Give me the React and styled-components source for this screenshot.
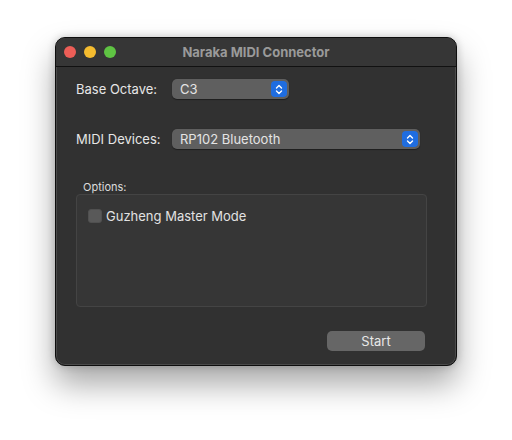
import React from "react";
import styled, { createGlobalStyle } from "styled-components";

const GlobalStyle = createGlobalStyle`
  html, body {
    margin: 0;
    padding: 0;
    background: #ffffff;
  }
  body {
    font-family: Inter, "Liberation Sans", sans-serif;
    -webkit-font-smoothing: antialiased;
  }
`;

const Page = styled.div`
  width: 512px;
  height: 440px;
  padding: 37px 0 0 55px;
  box-sizing: border-box;
`;

const Window = styled.div`
  width: 402px;
  height: 329px;
  box-sizing: border-box;
  display: flex;
  flex-direction: column;
  background: #313131;
  border: 1px solid #0e0e0e;
  border-radius: 10px;
  box-shadow: inset 0 0 0 1px #4a4a4a, 0 18px 32px rgba(0, 0, 0, 0.35),
    0 0 8px rgba(0, 0, 0, 0.2);
  overflow: hidden;
`;

const TitleBar = styled.div`
  height: 28px;
  flex-shrink: 0;
  display: flex;
  align-items: center;
  padding: 0 8px;
  background: #363636;
  border-bottom: 1px solid #111;
  position: relative;
`;

const Lights = styled.div`
  display: flex;
  gap: 8px;
`;

const Light = styled.span`
  width: 12px;
  height: 12px;
  border-radius: 50%;
  background: ${(p) => p.color};
`;

const Title = styled.div`
  position: absolute;
  left: 0;
  right: 0;
  text-align: center;
  font-size: 13px;
  font-weight: 700;
  color: #9a9a9a;
  pointer-events: none;
`;

const Content = styled.div`
  flex: 1;
  display: flex;
  flex-direction: column;
  padding: 12px 29px 14px 20px;
`;

const Row = styled.div`
  display: flex;
  align-items: center;
  height: 20px;
  margin-bottom: ${(p) => p.gap || 0}px;
`;

const Label = styled.span`
  width: 96px;
  flex-shrink: 0;
  font-size: 13px;
  color: #e6e6e6;
`;

const Popup = styled.div`
  width: ${(p) => p.width}px;
  height: 20px;
  box-sizing: border-box;
  display: flex;
  align-items: center;
  justify-content: space-between;
  padding: 0 2px 0 8px;
  background: #5f5f5f;
  border-radius: 5px;
  box-shadow: 0 0.5px 1px rgba(0, 0, 0, 0.4);
  font-size: 13px;
  color: #e4e4e4;
`;

const Stepper = styled.span`
  width: 16px;
  height: 16px;
  border-radius: 4px;
  background: #1f6de0;
  display: flex;
  align-items: center;
  justify-content: center;
`;

const GroupTitle = styled.div`
  font-size: 11px;
  line-height: 13px;
  color: #dcdcdc;
  margin: 0 0 0 7px;
`;

const GroupBox = styled.div`
  height: 113px;
  box-sizing: border-box;
  background: #363636;
  border: 1px solid #444;
  border-radius: 4px;
  padding: 13px 11px;
`;

const CheckRow = styled.label`
  display: flex;
  align-items: center;
  gap: 4px;
  font-size: 13px;
  color: #e2e2e2;
`;

const Box = styled.span`
  width: 14px;
  height: 14px;
  box-sizing: border-box;
  border-radius: 3px;
  background: #595959;
  border: 1px solid #505050;
`;

const Footer = styled.div`
  display: flex;
  justify-content: flex-end;
  margin-top: 24px;
  padding-right: 2px;
`;

const Button = styled.button`
  width: 98px;
  height: 20px;
  border: none;
  border-radius: 5px;
  background: #666666;
  color: #e8e8e8;
  font-family: inherit;
  font-size: 13px;
  padding: 0;
`;

const Chevrons = () => (
  <svg width="8" height="11" viewBox="0 0 8 11" fill="none">
    <path
      d="M1.5 4 L4 1.5 L6.5 4 M1.5 7 L4 9.5 L6.5 7"
      stroke="#fff"
      strokeWidth="1.4"
      strokeLinecap="round"
      strokeLinejoin="round"
    />
  </svg>
);

export default function App() {
  return (
    <Page>
      <GlobalStyle />
      <Window>
        <TitleBar>
          <Lights>
            <Light color="#ed5e57" />
            <Light color="#f5bc2f" />
            <Light color="#5fc443" />
          </Lights>
          <Title>Naraka MIDI Connector</Title>
        </TitleBar>
        <Content>
          <Row gap={30}>
            <Label>Base Octave:</Label>
            <Popup width={117}>
              C3
              <Stepper>
                <Chevrons />
              </Stepper>
            </Popup>
          </Row>
          <Row gap={32}>
            <Label>MIDI Devices:</Label>
            <Popup width={248}>
              RP102 Bluetooth
              <Stepper>
                <Chevrons />
              </Stepper>
            </Popup>
          </Row>
          <GroupTitle>Options:</GroupTitle>
          <GroupBox>
            <CheckRow>
              <Box />
              Guzheng Master Mode
            </CheckRow>
          </GroupBox>
          <Footer>
            <Button>Start</Button>
          </Footer>
        </Content>
      </Window>
    </Page>
  );
}
